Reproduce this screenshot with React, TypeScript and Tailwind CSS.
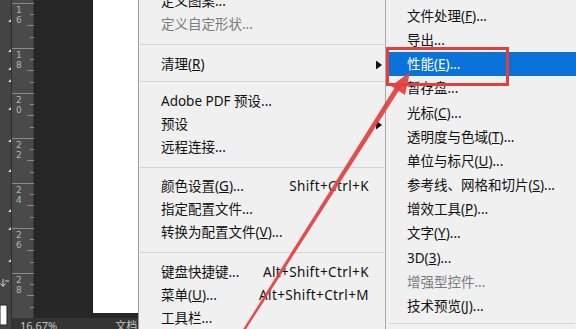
import React from "react";

type Row =
  | { kind: "item"; label: React.ReactNode; shortcut?: string; sub?: boolean; disabled?: boolean; active?: boolean }
  | { kind: "sep"; h: number; top: number };

const mainMenu: Row[] = [
  { kind: "item", label: "定义图案..." },
  { kind: "item", label: "定义自定形状...", disabled: true },
  { kind: "sep", h: 17, top: 8 },
  { kind: "item", label: <>清理(<u>R</u>)</>, sub: true },
  { kind: "sep", h: 14, top: 5 },
  { kind: "item", label: "Adobe PDF 预设..." },
  { kind: "item", label: "预设", sub: true },
  { kind: "item", label: "远程连接..." },
  { kind: "sep", h: 16, top: 8 },
  { kind: "item", label: <>颜色设置(<u>G</u>)...</>, shortcut: "Shift+Ctrl+K" },
  { kind: "item", label: "指定配置文件..." },
  { kind: "item", label: <>转换为配置文件(<u>V</u>)...</> },
  { kind: "sep", h: 17, top: 8 },
  { kind: "item", label: "键盘快捷键...", shortcut: "Alt+Shift+Ctrl+K" },
  { kind: "item", label: <>菜单(<u>U</u>)...</>, shortcut: "Alt+Shift+Ctrl+M" },
  { kind: "item", label: "工具栏..." },
];

const subMenu: Row[] = [
  { kind: "item", label: <>文件处理(<u>F</u>)...</> },
  { kind: "item", label: "导出..." },
  { kind: "item", label: <>性能(<u>E</u>)...</>, active: true },
  { kind: "item", label: "暂存盘..." },
  { kind: "item", label: <>光标(<u>C</u>)...</> },
  { kind: "item", label: <>透明度与色域(<u>T</u>)...</> },
  { kind: "item", label: <>单位与标尺(<u>U</u>)...</> },
  { kind: "item", label: <>参考线、网格和切片(<u>S</u>)...</> },
  { kind: "item", label: <>增效工具(<u>P</u>)...</> },
  { kind: "item", label: <>文字(<u>Y</u>)...</> },
  { kind: "item", label: <>3D(<u>3</u>)...</> },
  { kind: "item", label: "增强型控件...", disabled: true },
  { kind: "item", label: <>技术预览(<u>J</u>)...</> },
  { kind: "sep", h: 12, top: 5 },
];

const toolMarks = [22, 52, 70, 82, 110, 142, 172, 212, 230, 262];
const rulerLabels = ["16", "18", "20", "22", "24", "26", "28"];

function Separator({ h, top }: { h: number; top: number }) {
  return (
    <div style={{ height: h, paddingTop: top }} className="mx-[1px]">
      <div className="h-px bg-[#d4d4d4]" />
    </div>
  );
}

function Toolbar() {
  return (
    <div className="w-[12px] shrink-0 bg-[#444444] border-r border-[#2e2e2e]">
      <svg width="12" height="329" viewBox="0 0 12 329">
        {toolMarks.map((y) => (
          <polygon key={y} points={`11,${y - 3} 11,${y} 8,${y}`} fill="#d8d8d8" />
        ))}
        <path d="M3 279 v7 M0.5 283.5 L3 286.5 L5.5 283.5 M5 281 h4" stroke="#d8d8d8" strokeWidth="1" fill="none" />
        <rect x="0" y="305" width="7" height="20" fill="#ffffff" stroke="#222" strokeWidth="1" />
      </svg>
    </div>
  );
}

function Ruler() {
  return (
    <div className="relative w-[22px] shrink-0 bg-[#4a4a4a] border-r border-[#363636]">
      <svg className="absolute inset-0" width="22" height="318" viewBox="0 0 22 318">
        {rulerLabels.map((_, k) => {
          const y = 3 + 45 * k;
          return (
            <g key={k} stroke="#8a8a8a" strokeWidth="1">
              <line x1="0" y1={y + 0.5} x2="22" y2={y + 0.5} />
              <line x1="18" y1={y + 11.5} x2="22" y2={y + 11.5} />
              <line x1="15" y1={y + 22.5} x2="22" y2={y + 22.5} />
              <line x1="18" y1={y + 34.5} x2="22" y2={y + 34.5} />
            </g>
          );
        })}
      </svg>
      <div className="relative pt-[5px] pl-[4px] font-['DejaVu_Sans',sans-serif] text-[9px] leading-[10px] text-[#b4b4b4]">
        {rulerLabels.map((l) => (
          <div key={l} className="h-[45px]">
            <div>{l[0]}</div>
            <div>{l[1]}</div>
          </div>
        ))}
      </div>
    </div>
  );
}

function MenuItem({ row, padLeft }: { row: Extract<Row, { kind: "item" }>; padLeft: number }) {
  const color = row.active ? "text-white bg-[#0a72d8]" : row.disabled ? "text-[#7c7c7c]" : "text-[#111111]";
  return (
    <div style={{ paddingLeft: padLeft }} className={`relative flex items-center h-full pr-[16px] whitespace-nowrap ${color}`}>
      <span className="flex-1">{row.label}</span>
      {row.shortcut && <span className="tracking-[0.4px]">{row.shortcut}</span>}
      {row.sub && (
        <svg className="absolute right-[3px] top-1/2 -translate-y-1/2" width="6" height="9" viewBox="0 0 6 9">
          <polygon points="0,0 6,4.5 0,9" fill="#111" />
        </svg>
      )}
    </div>
  );
}

export default function App() {
  return (
    <div className="relative flex w-[576px] h-[329px] overflow-hidden bg-[#f0f0f0] font-['Noto_Sans','Noto_Sans_CJK_SC',sans-serif] text-[13.5px]">
      {/* photoshop workspace */}
      <Toolbar />
      <div className="flex flex-col w-[126px] shrink-0">
        <div className="flex h-[318px]">
          <Ruler />
          <div className="flex-1 bg-[#272727] pl-[58px]">
            <div className="h-[313px] bg-white border-l border-[#1c1c1c]" />
          </div>
        </div>
        <div className="flex-1 bg-[#343434] flex gap-[58px] pl-[8px] pt-[1px] text-[11px] leading-[13px] text-[#c4c4c4]">
          <span>16.67%</span>
          <span>文档</span>
        </div>
      </div>

      {/* edit menu */}
      <div className="w-[247px] shrink-0 border-l border-[#9c9c9c] bg-[#f0f0f0]">
        <div className="mt-[-10px]">
          {mainMenu.map((row, i) =>
            row.kind === "sep" ? (
              <Separator key={i} h={row.h} top={row.top} />
            ) : (
              <div key={i} className="h-[23px]">
                <MenuItem row={row} padLeft={22} />
              </div>
            )
          )}
        </div>
      </div>

      {/* preferences submenu */}
      <div className="flex-1 border-l border-[#a8a8a8] bg-[#f0f0f0] pt-[4px] pl-[2px]">
        {subMenu.map((row, i) =>
          row.kind === "sep" ? (
            <Separator key={i} h={row.h} top={row.top} />
          ) : (
            <div key={i} className="h-[24.17px]">
              <MenuItem row={row} padLeft={19} />
            </div>
          )
        )}
      </div>

      {/* annotation */}
      <div className="absolute left-[386px] top-[47px] w-[123px] h-[39px] border-[3px] border-[#e0403f]" />
      <svg className="absolute left-0 top-0 pointer-events-none" width="576" height="329" viewBox="0 0 576 329">
        <polygon points="242,331 244.5,331.5 401.5,86.5 397,84" fill="#e0403f" fillOpacity="0.92" />
        <polygon points="410,72 405,95 391,86" fill="#e0403f" fillOpacity="0.92" />
      </svg>
    </div>
  );
}
